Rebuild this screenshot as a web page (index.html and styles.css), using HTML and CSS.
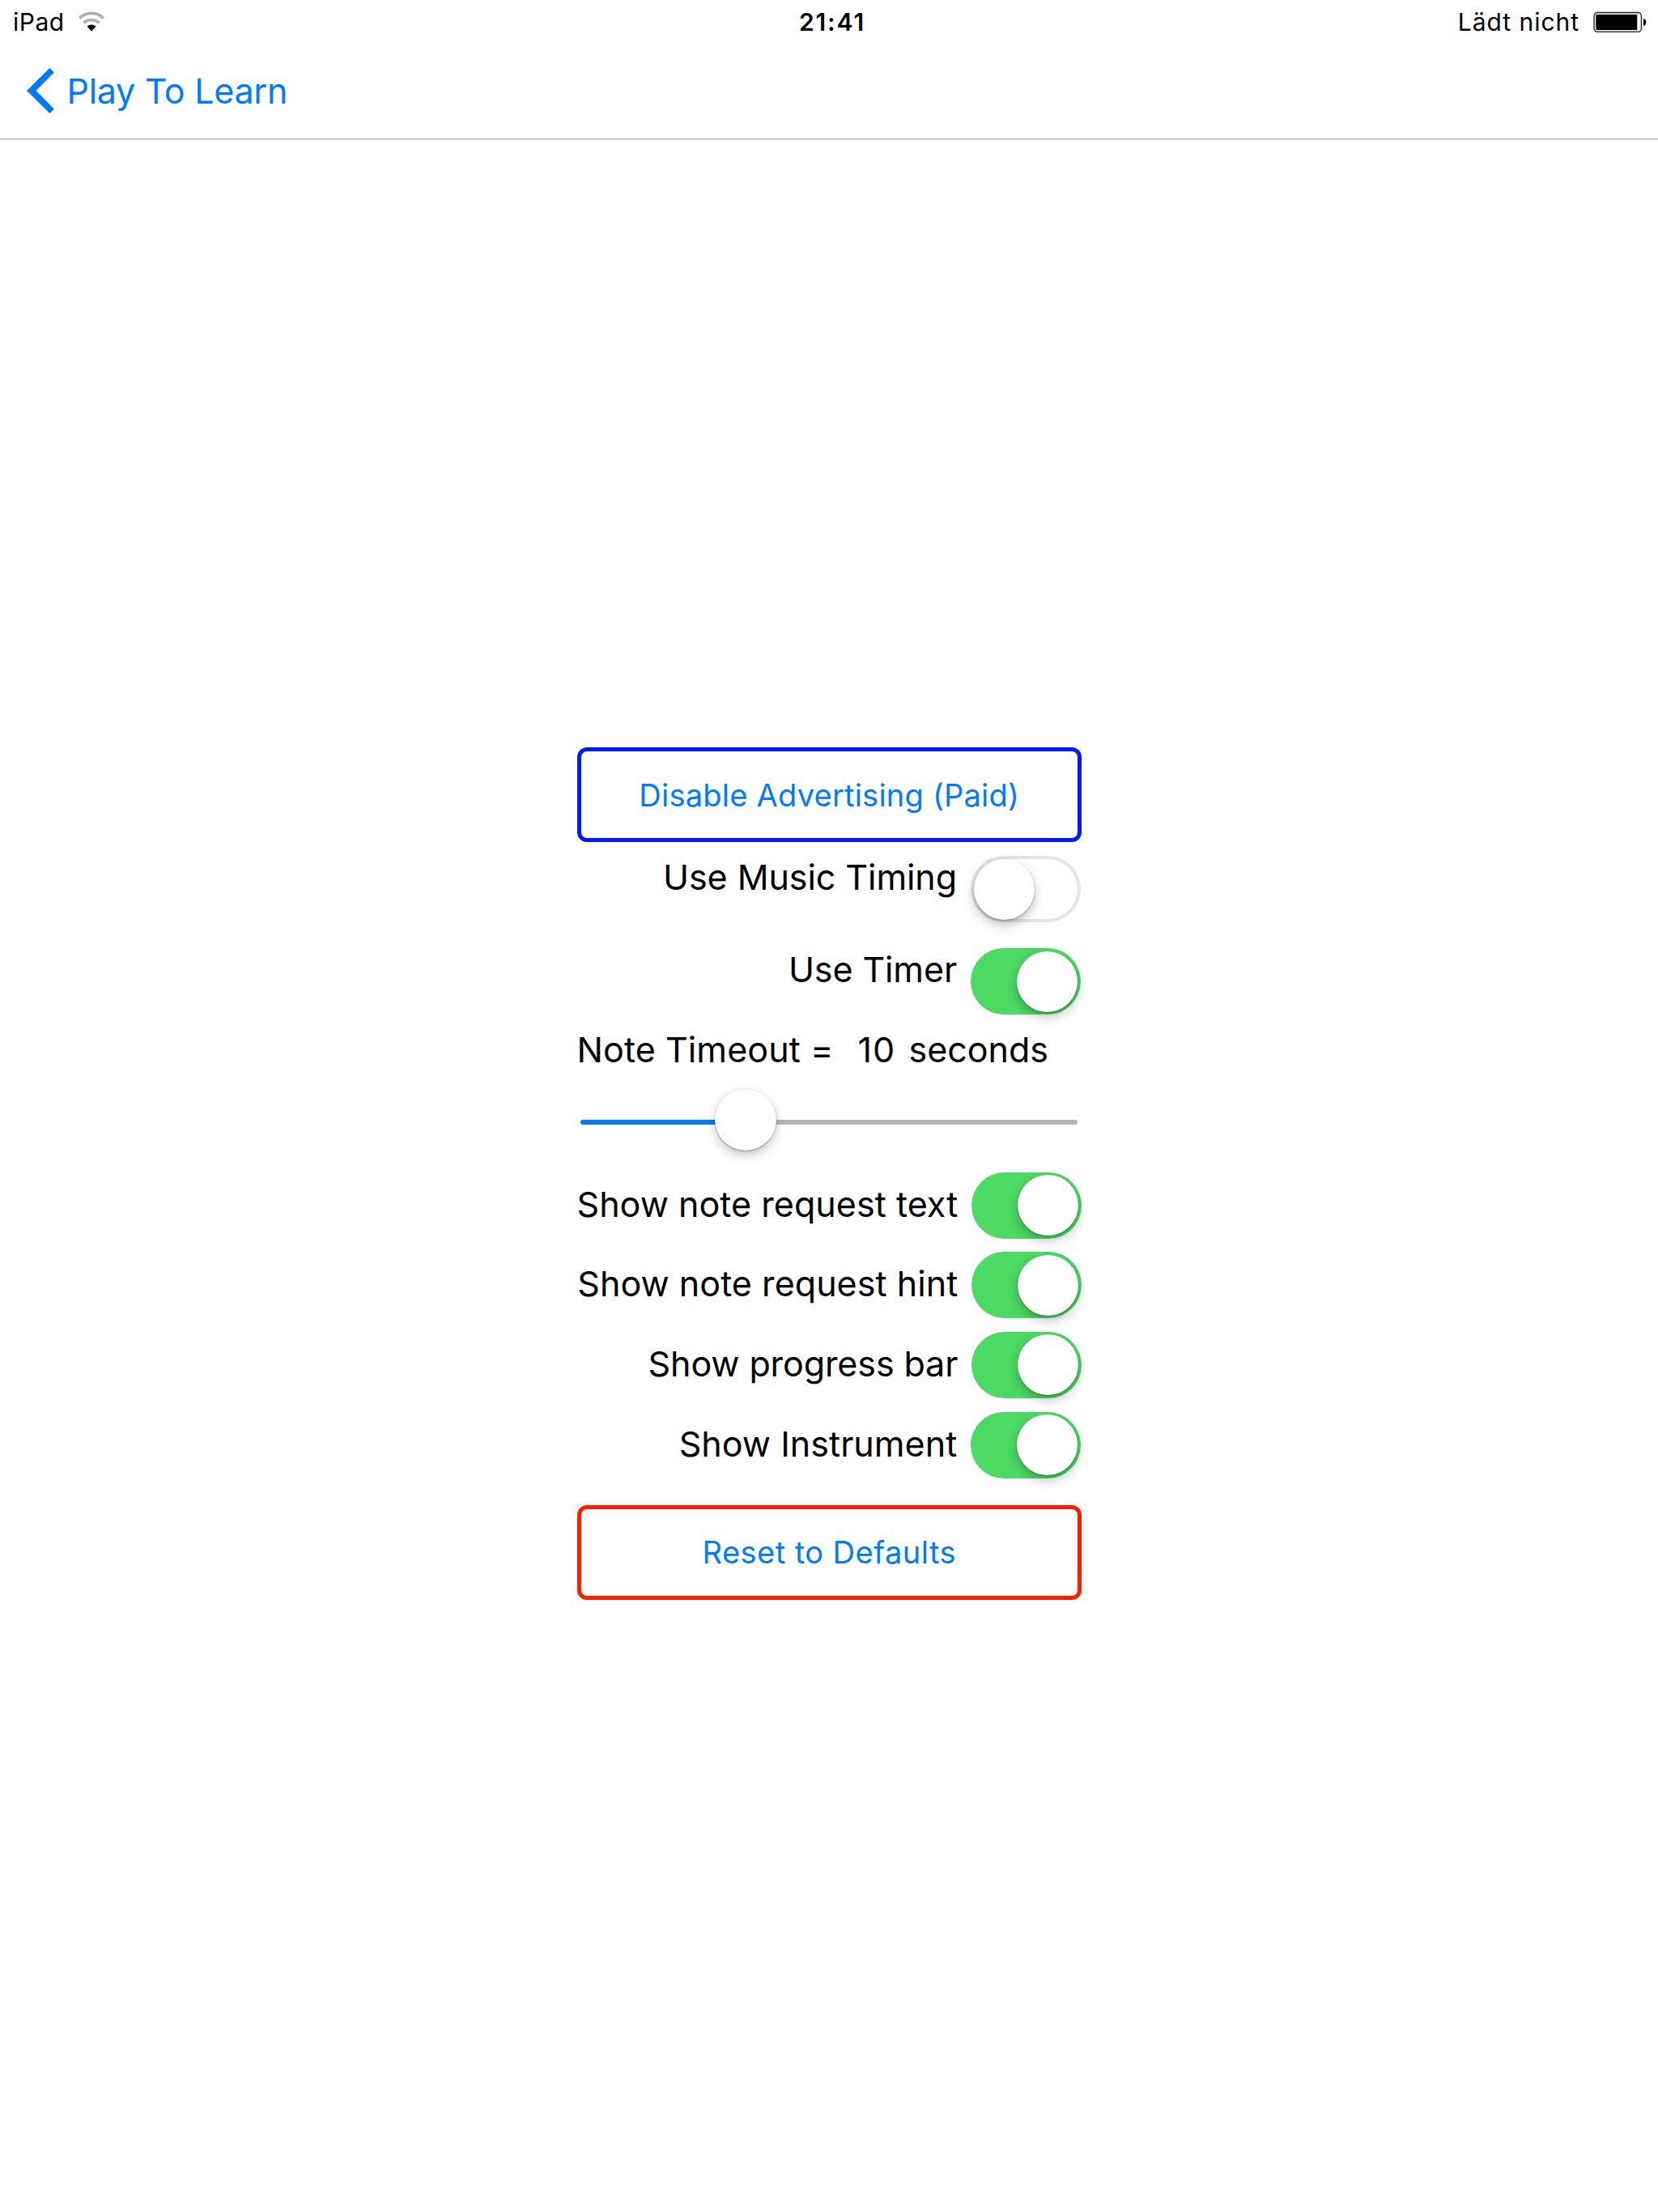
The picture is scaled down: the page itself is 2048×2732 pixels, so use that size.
FILE: index.html
```html
<!DOCTYPE html>
<html lang="en">
<head>
<meta charset="utf-8">
<title>Settings</title>
<link rel="stylesheet" href="styles.css">
</head>
<body>
<header class="header">
  <div class="status">
    <div class="status-left">
      <span class="device">iPad</span>
      <svg class="wifi" width="34" height="26" viewBox="96 13 34 26">
        <path d="M98.2 22.3a21.5 21.5 0 0 1 29.6 0M103.4 28.4a14 14 0 0 1 19.2 0" fill="none" stroke="#b0b0b0" stroke-width="3.9"/>
        <path d="M107.6 32.8a7.4 7.4 0 0 1 10.8 0l-5.4 5.6z" fill="#000"/>
      </svg>
    </div>
    <span class="clock">21:41</span>
    <div class="status-right">
      <span class="charge">Lädt nicht</span>
      <svg class="battery" width="66" height="26" viewBox="1968 14 66 26">
        <rect x="1969" y="15.5" width="58.5" height="24" rx="4.5" fill="#e4e8e4" stroke="#222" stroke-width="1.3"/>
        <rect x="1971.3" y="18" width="51.2" height="19" rx="1" fill="#000"/>
        <rect x="2022.5" y="17.5" width="3.5" height="20" rx="1.5" fill="#fff"/>
        <path d="M2030 23q3.4.6 3.4 4.5t-3.4 4.5z" fill="#000"/>
      </svg>
    </div>
  </div>
  <nav class="nav">
    <svg class="chevron" width="34" height="56" viewBox="0 0 34 56"><path d="M28.3 0 0 28l28.3 28 5.5-5.5L11.5 28 33.8 5.5z" fill="#007aff"/></svg>
    <a class="back">Play To Learn</a>
  </nav>
</header>
<main class="panel">
  <button class="button button-blue"><span class="t-paid">Disable Advertising (Paid)</span></button>
  <div class="row row-top row-music"><span class="label t-music">Use Music Timing</span><span class="switch off"></span></div>
  <div class="row row-top row-timer"><span class="label t-timer">Use Timer</span><span class="switch"></span></div>
  <div class="timeout"><span class="timeout-name">Note Timeout =</span><span class="timeout-value">10</span><span class="timeout-unit">seconds</span></div>
  <div class="slider"><span class="track-on"></span><span class="thumb"></span><span class="track-off"></span></div>
  <div class="options">
    <div class="row"><span class="label">Show note request text</span><span class="switch"></span></div>
    <div class="row"><span class="label">Show note request hint</span><span class="switch"></span></div>
    <div class="row"><span class="label t-progress">Show progress bar</span><span class="switch"></span></div>
    <div class="row row-last"><span class="label">Show Instrument</span><span class="switch"></span></div>
  </div>
  <button class="button button-red"><span class="t-reset">Reset to Defaults</span></button>
</main>
</body>
</html>
```
FILE: styles.css
```css
* { box-sizing: border-box; }
body {
  margin: 0;
  background: #fff;
  color: #000;
  font-family: Inter, "Liberation Sans", sans-serif;
  font-size: 43px;
  line-height: 53px;
  white-space: nowrap;
}
.header {
  height: 172px;
  border-bottom: 1px solid #b2b2b2;
  box-shadow: 0 1px #e2e2e2;
}
.status {
  display: grid;
  grid-template-columns: 1fr auto 1fr;
  height: 56px;
  padding: 9px 14px 0 16px;
  font-size: 30px;
  line-height: 36px;
}
.status-left, .status-right { display: flex; align-items: flex-start; }
.status-right { justify-content: flex-end; }
.wifi { margin: 4px 0 0 16px; }
.battery { margin: 5px 0 0 17px; }
.device { letter-spacing: 0.5px; }
.clock { font-weight: 600; letter-spacing: 1.9px; margin-left: 6px; }
.charge { letter-spacing: 0.97px; }
.nav {
  display: flex;
  align-items: center;
  height: 112px;
  padding-left: 33px;
}
.back { margin-left: 15.5px; color: #007aff; letter-spacing: -0.28px; }
.panel {
  width: 623.5px;
  margin: 751px 0 0 712.5px;
  display: flex;
  flex-direction: column;
}
.button {
  height: 117px;
  padding: 0;
  border: 5px solid;
  border-radius: 12px;
  background: #fff;
  font: 38px/46px Inter, "Liberation Sans", sans-serif;
}
.button span { color: #007aff; }
.button-blue { border-color: #001aff; }
.button-red { border-color: #ff1a00; margin-top: 33px; }
.t-paid { letter-spacing: 0.23px; }
.t-reset { letter-spacing: 0.45px; }
.row {
  display: flex;
  justify-content: flex-end;
  align-items: center;
  gap: 17px;
  height: 82px;
}
.row .label { margin-bottom: 3px; letter-spacing: 0.05px; }
.row-top { align-items: flex-start; padding-right: 1px; }
.row-music { margin-top: 17px; }
.row-timer { margin-top: 32px; }
.row-last { padding-right: 1px; }
.row .t-music { letter-spacing: -0.06px; }
.row .t-timer { letter-spacing: -0.1px; }
.row .t-progress { letter-spacing: -0.1px; }
.switch {
  display: flex;
  justify-content: flex-end;
  align-items: center;
  flex: none;
  width: 136px;
  height: 82px;
  padding: 0 4px;
  border-radius: 41px;
  background: #4cd964;
}
.switch::before {
  content: "";
  width: 75px;
  height: 75px;
  border-radius: 50%;
  background: #fff;
  box-shadow: 0 1px 2px rgba(0,0,0,.3), 0 6px 14px rgba(0,0,0,.25);
}
.switch.off {
  justify-content: flex-start;
  background: #fff;
  box-shadow: inset 0 0 0 4px #e5e5e5;
}
.timeout { display: flex; margin-top: 17px; }
.timeout-name { width: 347px; letter-spacing: 0.1px; }
.timeout-value { width: 63px; letter-spacing: 1px; }
.slider {
  display: flex;
  align-items: center;
  height: 76px;
  margin: 22px 5px 0 4px;
}
.track-on, .track-off {
  height: 6px;
  margin-top: 5px;
  border-radius: 3px;
}
.track-on { width: 169px; margin-right: -3px; background: #007aff; }
.track-off { flex: 1; margin-left: -3px; background: #b4b4b4; }
.thumb {
  position: relative;
  width: 76px;
  height: 76px;
  border-radius: 50%;
  background: #fff;
  box-shadow: 0 1px 2px rgba(0,0,0,.35), 0 6px 14px rgba(0,0,0,.22);
}
.options {
  display: grid;
  row-gap: 16.7px;
  margin-top: 26.5px;
}
```
